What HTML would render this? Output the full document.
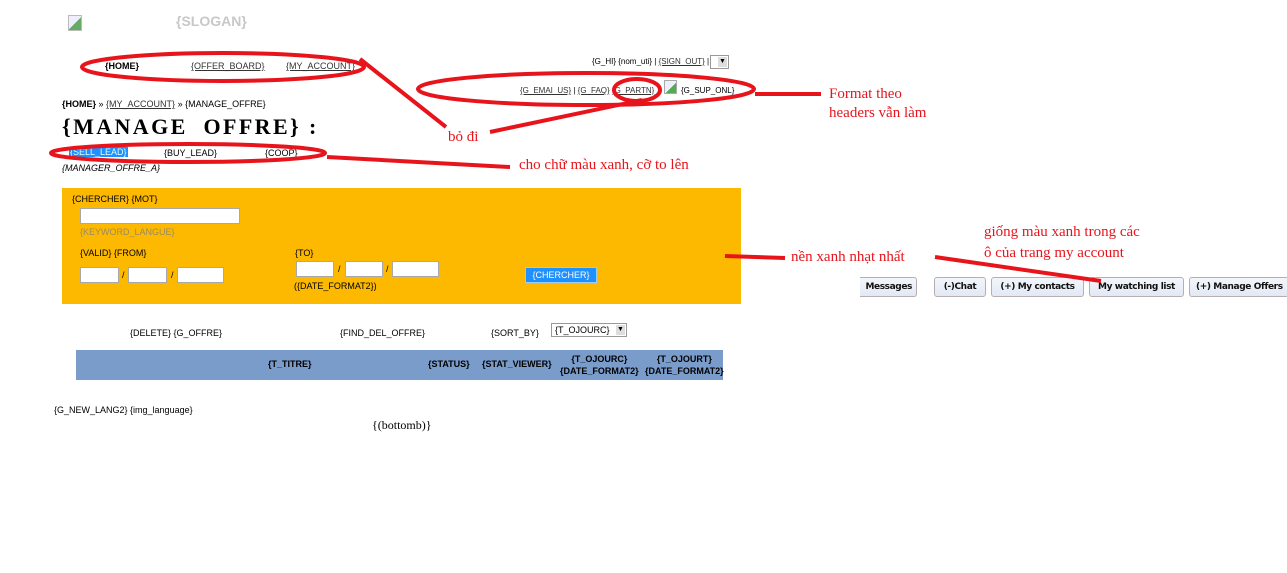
<!DOCTYPE html>
<html><head><meta charset="utf-8"><style>
body{margin:0;width:1287px;height:573px;background:#fff;position:relative;overflow:hidden;font-family:"Liberation Sans",Arial,sans-serif;font-size:9px;color:#000}
.a{position:absolute;white-space:nowrap}
u{color:#333}
.r{font-family:"Liberation Serif","DejaVu Serif",serif;color:#e8141c;font-size:15px}
.in{position:absolute;background:#fff;border:1px solid #a8a8a8;box-sizing:border-box}
.tab{position:absolute;top:277px;height:20px;background:linear-gradient(#f3f6fb,#e2e9f5);border:1px solid #b8aeb0;border-radius:3px;box-sizing:border-box;font-family:"DejaVu Sans",Verdana,sans-serif;font-size:9px;font-weight:bold;line-height:18px;text-align:center;color:#111;white-space:nowrap;overflow:hidden;letter-spacing:-0.4px}
</style></head><body>
<div class="a" style="left:68px;top:15px;width:12px;height:14px;border:1px solid #bbb;background:linear-gradient(135deg,#eef 50%,#6a6 50%)"></div>
<div class="a" style="left:176px;top:13px;font-size:14px;font-weight:bold;color:#c8c8c8">{SLOGAN}</div>

<div class="a" style="left:105px;top:61px;font-weight:bold">{HOME}</div>
<div class="a" style="left:191px;top:61px"><u>{OFFER_BOARD}</u></div>
<div class="a" style="left:286px;top:61px"><u>{MY_ACCOUNT}</u></div>

<div class="a" style="left:592px;top:57px;font-size:8px">{G_HI} {nom_uti} | <u>{SIGN_OUT}</u> |</div>
<div class="a" style="left:710px;top:55px;width:19px;height:14px;border:1px solid #999;box-sizing:border-box;background:#fff"><div style="position:absolute;right:1px;top:1px;width:9px;height:10px;background:#ddd;font-size:7px;line-height:10px;text-align:center">▼</div></div>
<div class="a" style="left:520px;top:86px;font-size:8px"><u>{G_EMAI_US}</u> | <u>{G_FAQ}</u> <u>{G_PARTN}</u></div>
<div class="a" style="left:664px;top:80px;width:11px;height:12px;border:1px solid #aaa;background:linear-gradient(135deg,#eef 55%,#5a5 55%)"></div>
<div class="a" style="left:681px;top:86px;font-size:8px">{G_SUP_ONL}</div>

<div class="a" style="left:62px;top:99px"><b>{HOME}</b> » <u>{MY_ACCOUNT}</u> » {MANAGE_OFFRE}</div>
<div class="a" style="left:62px;top:114px;font-family:'Liberation Serif',serif;font-weight:bold;font-size:22px;letter-spacing:2.4px">{MANAGE&nbsp;&nbsp;OFFRE} :</div>
<div class="a" style="left:69px;top:147px;background:#1e90ff;color:#dff;padding:0 1px">{SELL_LEAD}</div>
<div class="a" style="left:164px;top:148px">{BUY_LEAD}</div>
<div class="a" style="left:265px;top:148px">{COOP}</div>
<div class="a" style="left:62px;top:163px;font-style:italic">{MANAGER_OFFRE_A}</div>

<div class="a" style="left:62px;top:188px;width:679px;height:116px;background:#fdb900"></div>
<div class="a" style="left:72px;top:194px">{CHERCHER} {MOT}</div>
<div class="in" style="left:80px;top:208px;width:160px;height:16px"></div>
<div class="a" style="left:80px;top:227px;color:#9a8a60">{KEYWORD_LANGUE}</div>
<div class="a" style="left:80px;top:248px">{VALID} {FROM}</div>
<div class="in" style="left:80px;top:267px;width:39px;height:16px"></div>
<div class="a" style="left:122px;top:270px">/</div>
<div class="in" style="left:128px;top:267px;width:39px;height:16px"></div>
<div class="a" style="left:171px;top:270px">/</div>
<div class="in" style="left:177px;top:267px;width:47px;height:16px"></div>
<div class="a" style="left:295px;top:248px">{TO}</div>
<div class="in" style="left:296px;top:261px;width:38px;height:16px"></div>
<div class="a" style="left:338px;top:264px">/</div>
<div class="in" style="left:345px;top:261px;width:38px;height:16px"></div>
<div class="a" style="left:386px;top:264px">/</div>
<div class="in" style="left:392px;top:261px;width:47px;height:16px"></div>
<div class="a" style="left:294px;top:281px">({DATE_FORMAT2})</div>
<div class="a" style="left:525px;top:267px;width:72px;height:16px;background:#1e90ff;border:1px solid #9cf;box-sizing:border-box;color:#fff;text-align:center;line-height:14px">{CHERCHER}</div>

<div class="tab" style="left:860px;width:57px;border-left:none;border-radius:0 3px 3px 0;text-align:right;padding-right:4px">Messages</div>
<div class="tab" style="left:934px;width:52px">(-)Chat</div>
<div class="tab" style="left:991px;width:93px">(+) My contacts</div>
<div class="tab" style="left:1089px;width:95px">My watching list</div>
<div class="tab" style="left:1189px;width:100px;text-align:left;padding-left:6px">(+) Manage Offers</div>

<div class="a" style="left:130px;top:328px">{DELETE} {G_OFFRE}</div>
<div class="a" style="left:340px;top:328px">{FIND_DEL_OFFRE}</div>
<div class="a" style="left:491px;top:328px">{SORT_BY}</div>
<div class="a" style="left:551px;top:323px;width:76px;height:14px;border:1px solid #999;box-sizing:border-box;background:#fff;padding-left:3px;line-height:12px">{T_OJOURC}<div style="position:absolute;right:1px;top:1px;width:9px;height:10px;background:#ddd;font-size:7px;line-height:10px;text-align:center">▼</div></div>

<div class="a" style="left:76px;top:350px;width:647px;height:30px;background:#7a9ccb"></div>
<div class="a" style="left:268px;top:359px;font-weight:bold">{T_TITRE}</div>
<div class="a" style="left:428px;top:359px;font-weight:bold">{STATUS}</div>
<div class="a" style="left:482px;top:359px;font-weight:bold">{STAT_VIEWER}</div>
<div class="a" style="left:560px;top:353px;font-weight:bold;text-align:center;line-height:12px">{T_OJOURC}<br>{DATE_FORMAT2}</div>
<div class="a" style="left:645px;top:353px;font-weight:bold;text-align:center;line-height:12px">{T_OJOURT}<br>{DATE_FORMAT2}</div>

<div class="a" style="left:54px;top:405px">{G_NEW_LANG2} {img_language}</div>
<div class="a" style="left:372px;top:418px;font-family:'Liberation Serif',serif;font-size:12px">{(bottomb)}</div>

<svg class="a" style="left:0;top:0" width="1287" height="573">
<g fill="none" stroke="#e8141c" stroke-width="4">
<ellipse cx="223" cy="67" rx="141" ry="14"/>
<ellipse cx="586" cy="89" rx="168" ry="16"/>
<ellipse cx="637" cy="90" rx="23" ry="11"/>
<ellipse cx="188" cy="153" rx="137" ry="9"/>
<line x1="360" y1="59" x2="446" y2="127"/>
<line x1="490" y1="132" x2="642" y2="100"/>
<line x1="755" y1="94" x2="821" y2="94"/>
<line x1="327" y1="157" x2="510" y2="167"/>
<line x1="725" y1="256" x2="785" y2="258"/>
<line x1="935" y1="257" x2="1101" y2="281"/>
</g></svg>
<div class="a r" style="left:829px;top:86px">Format theo</div>
<div class="a r" style="left:829px;top:105px">headers vẫn làm</div>
<div class="a r" style="left:448px;top:129px">bỏ đi</div>
<div class="a r" style="left:519px;top:157px">cho chữ màu xanh, cỡ to lên</div>
<div class="a r" style="left:791px;top:249px">nền xanh nhạt nhất</div>
<div class="a r" style="left:984px;top:224px">giống màu xanh trong các</div>
<div class="a r" style="left:984px;top:245px">ô của trang my account</div>
</body></html>
